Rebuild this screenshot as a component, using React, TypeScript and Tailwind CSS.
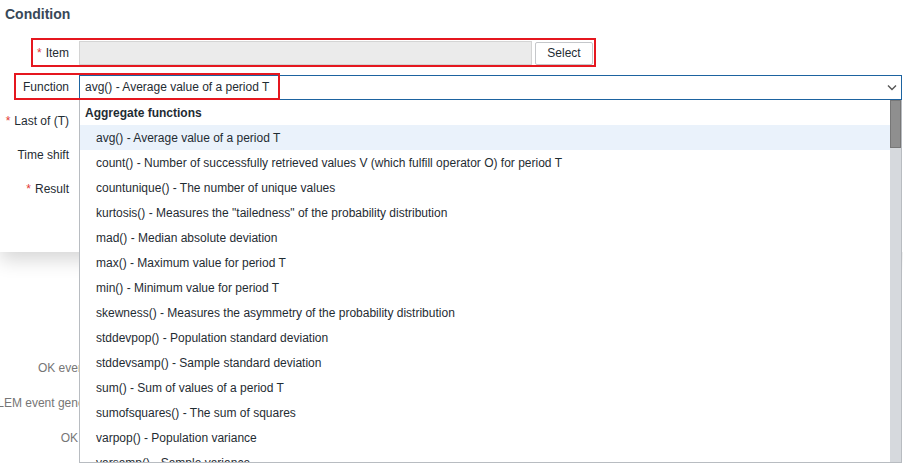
import React from 'react';

const FUNCTIONS = [
  'avg() - Average value of a period T',
  'count() - Number of successfully retrieved values V (which fulfill operator O) for period T',
  'countunique() - The number of unique values',
  'kurtosis() - Measures the "tailedness" of the probability distribution',
  'mad() - Median absolute deviation',
  'max() - Maximum value for period T',
  'min() - Minimum value for period T',
  'skewness() - Measures the asymmetry of the probability distribution',
  'stddevpop() - Population standard deviation',
  'stddevsamp() - Sample standard deviation',
  'sum() - Sum of values of a period T',
  'sumofsquares() - The sum of squares',
  'varpop() - Population variance',
  'varsamp() - Sample variance',
];

const Label: React.FC<{ text: string; required?: boolean }> = ({ text, required }) => (
  <div className="w-[69px] shrink-0 text-right whitespace-nowrap">
    {required && <span className="text-[#e33734] mr-[4px]">*</span>}
    {text}
  </div>
);

const BG_LABELS = ['OK event generation', 'PROBLEM event generation mode', 'OK event closes'];

const App: React.FC = () => {
  return (
    <div
      className="relative w-[903px] h-[463px] overflow-hidden bg-white text-[12px] text-[#1f2c33]"
      style={{ fontFamily: '"Liberation Sans", Arial, sans-serif' }}
    >
      {/* dialog */}
      <div className="relative z-10 h-[252px] bg-white shadow-[0_8px_18px_rgba(0,0,0,0.16)]">
        <div className="pl-[5px] pt-[5px] text-[14px] leading-[18px] font-bold text-[#384858]">Condition</div>

        <div className="mt-[18px] flex flex-col gap-[10px]">
          <div className="flex items-center h-[24px]">
            <Label text="Item" required />
            <div className="ml-[10px] w-[453px] h-[24px] bg-[#ebebeb] border border-[#d4d4d4]" />
            <button className="ml-[3px] w-[58px] h-[23px] bg-white border border-[#c5c7ca] rounded-[2px] text-[12px] text-[#1f2c33]">
              Select
            </button>
          </div>

          <div className="flex items-center h-[24px]">
            <Label text="Function" />
            <div className="ml-[10px] w-[823px] h-[25px] border border-[#1d63a0] flex items-center pl-[5px] pr-[4px]">
              <span className="flex-1">avg() - Average value of a period T</span>
              <svg width="10" height="7" viewBox="0 0 10 7" className="mt-[1px]">
                <path d="M1 1.5 L5 5.5 L9 1.5" fill="none" stroke="#555" strokeWidth="1.4" />
              </svg>
            </div>
          </div>

          <div className="flex items-center h-[24px]">
            <Label text="Last of (T)" required />
          </div>
          <div className="flex items-center h-[24px]">
            <Label text="Time shift" />
          </div>
          <div className="flex items-center h-[24px]">
            <Label text="Result" required />
          </div>
        </div>
      </div>

      {/* page behind the dialog */}
      <div className="mt-[109px] flex flex-col gap-[20px] text-[#767676]">
        {BG_LABELS.map(t => (
          <div key={t} className="w-[148px] flex justify-end whitespace-nowrap leading-[15px]">
            <span className="shrink-0">{t}</span>
          </div>
        ))}
      </div>

      {/* annotation boxes */}
      <div className="absolute z-30 left-[31px] top-[38px] w-[565px] h-[29px] border-2 border-[#e5171f]" />
      <div className="absolute z-30 left-[14px] top-[73px] w-[266px] h-[27px] border-2 border-[#e5171f]" />

      {/* dropdown list */}
      <div className="absolute z-20 left-[79px] top-[100px] w-[823px] h-[363px] bg-white border border-t-0 border-[#b8bcc1] overflow-hidden">
        <div className="h-[25px] flex items-center pl-[5px] font-bold">Aggregate functions</div>
        {FUNCTIONS.map((f, i) => (
          <div
            key={f}
            className={`h-[25px] flex items-center pl-[16px] whitespace-nowrap ${i === 0 ? 'bg-[#eaf2fb]' : ''}`}
          >
            {f}
          </div>
        ))}
        <div className="absolute right-0 top-0 bottom-0 w-[11px] bg-[#d6d9dd]">
          <div className="h-[48px] bg-[#8f8f8f] border border-[#777]" />
        </div>
      </div>
    </div>
  );
};

export default App;
